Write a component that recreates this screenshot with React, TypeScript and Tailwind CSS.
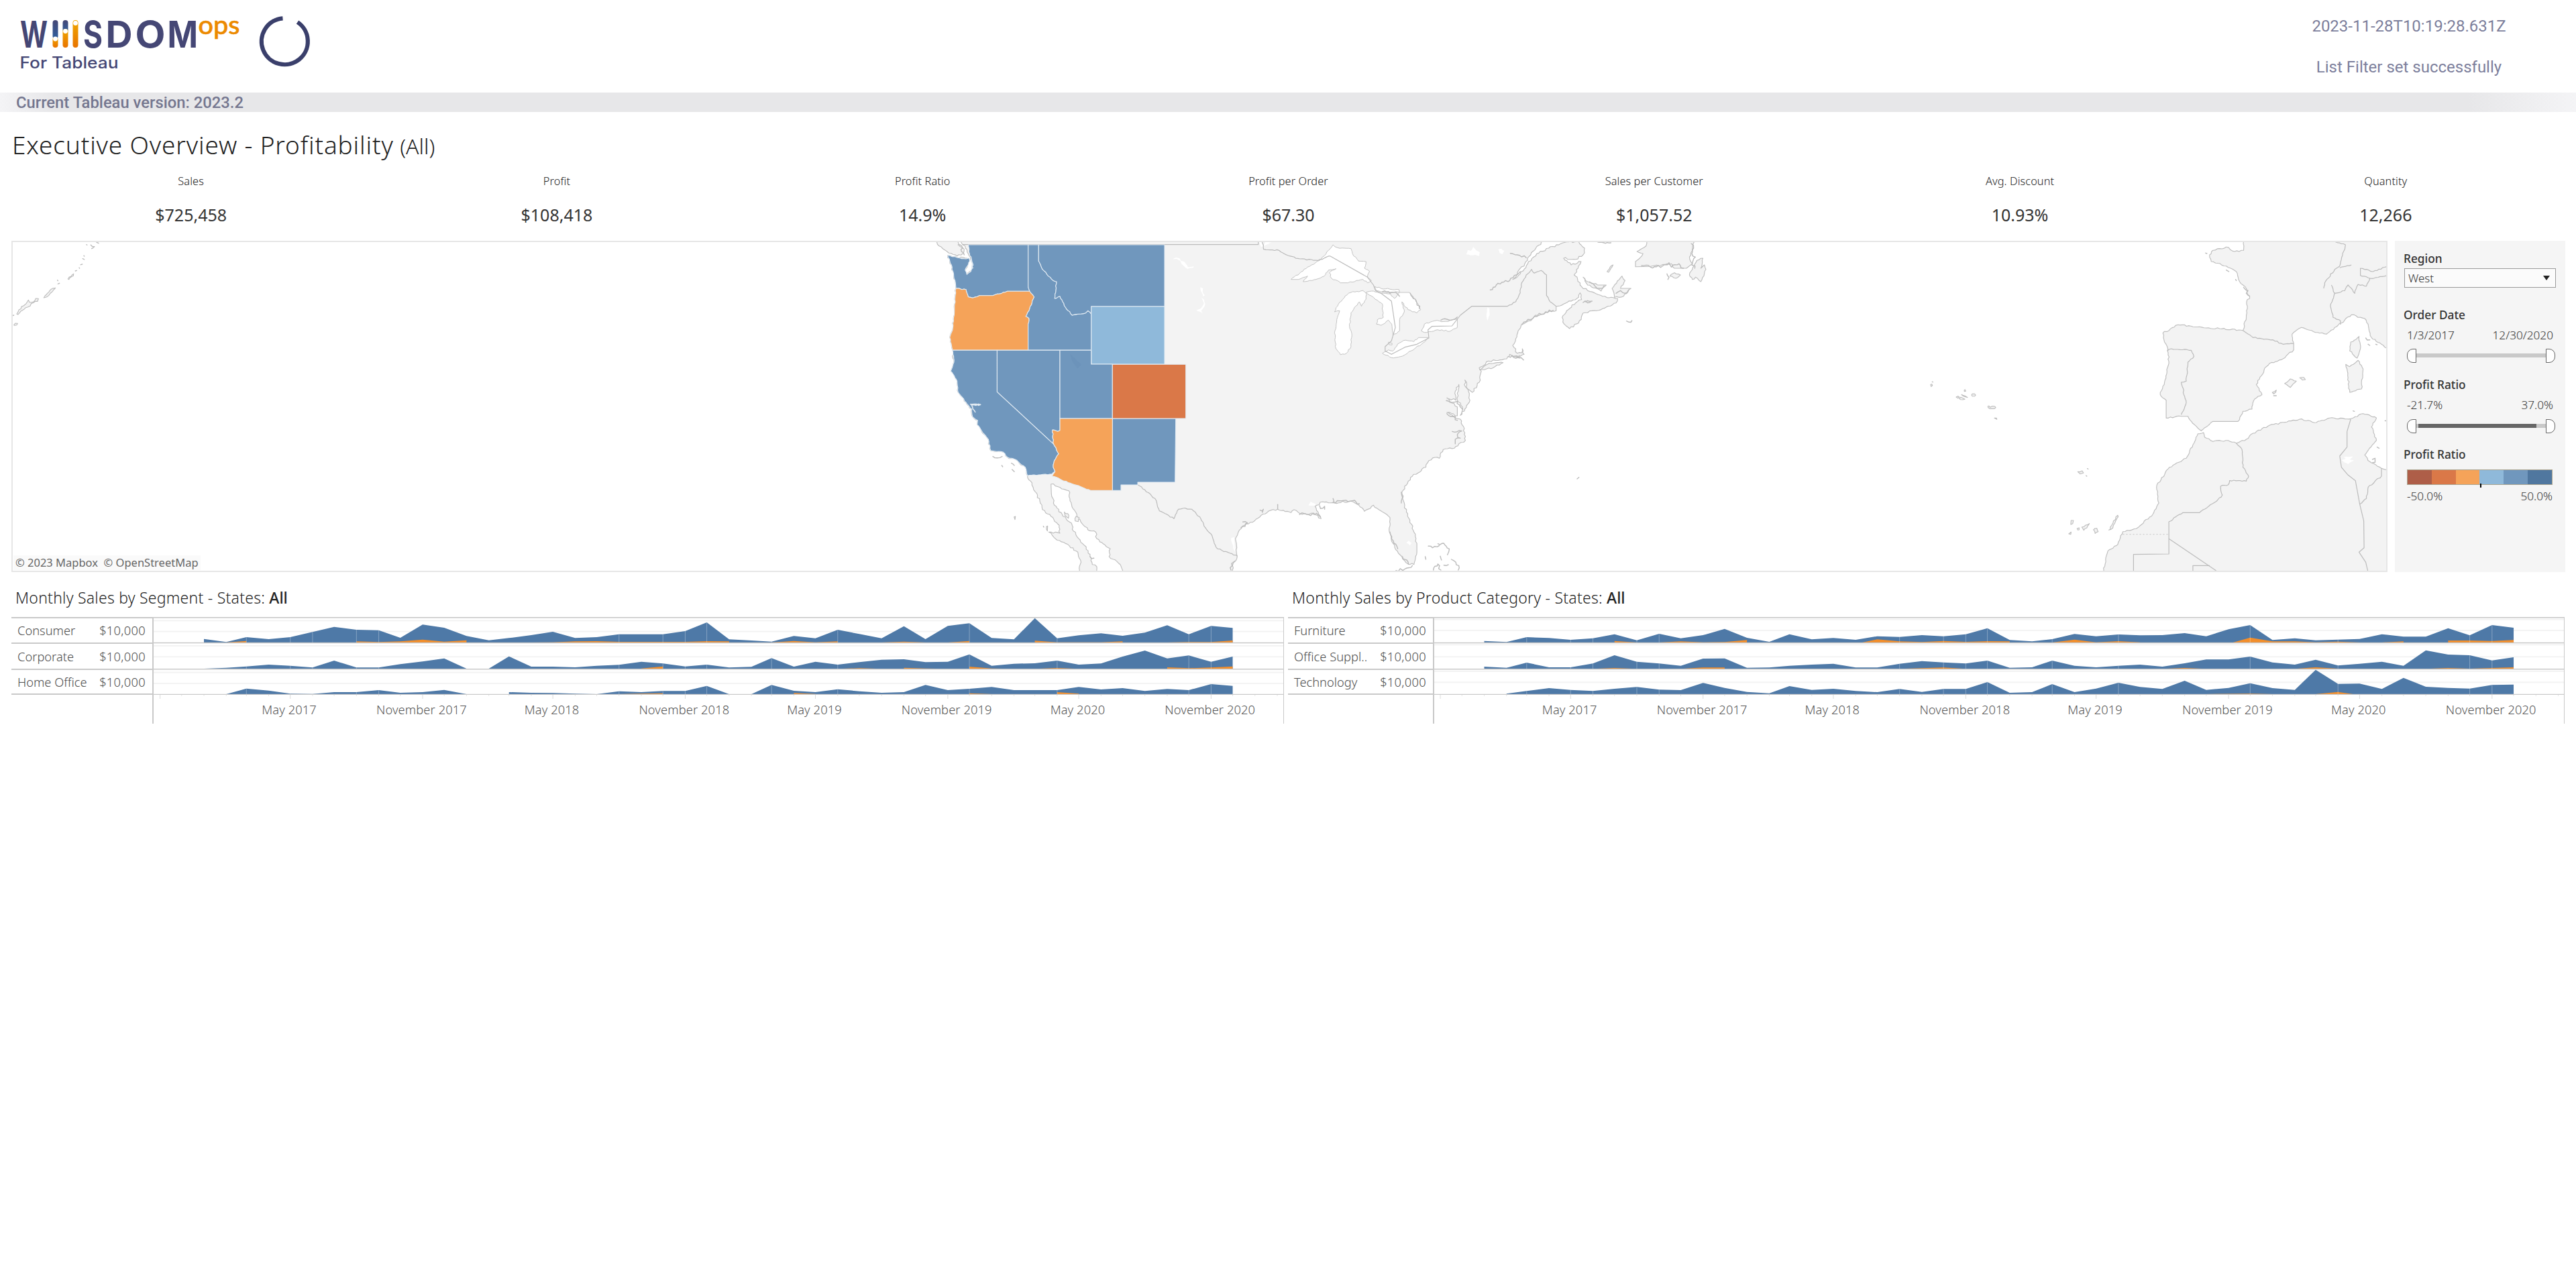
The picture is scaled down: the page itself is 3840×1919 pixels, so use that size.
type Frame = [number, number, number, number];
type Pt = [number, number];

/* Map sheets: origin x, origin y, units per pixel on x and y */
const WEST: Frame = [1380, 350, 3, 3];
const EAST: Frame = [1880, 350, 2.24, 3];
const EURO: Frame = [3060, 350, 2.0103, 3];
const ALEU: Frame = [0, 350, 3, 3];
const AZOR: Frame = [2840, 540, 3, 3];

function pts(f: Frame, s: string): Pt[] {
  return s
    .trim()
    .split(/\s+/)
    .map((p) => {
      const [x, y] = p.split(",").map(Number);
      return [f[0] + x / f[2], f[1] + y / f[3]] as Pt;
    });
}

/* Breaks short oblique segments into a jagged line; the same segment always gives the same line. */
function jag(a: Pt, b: Pt, amp: number): Pt[] {
  const swap = a[0] > b[0] || (a[0] === b[0] && a[1] > b[1]);
  const [p, q] = swap ? [b, a] : [a, b];
  const dx = q[0] - p[0];
  const dy = q[1] - p[1];
  const len = Math.hypot(dx, dy);
  if (Math.abs(dx) < 0.8 || Math.abs(dy) < 0.5 || len > 62 || len < 5) return [b];
  const n = Math.max(2, Math.round(len / 3.2));
  let seed = Math.abs(Math.round(p[0] * 31 + p[1] * 17 + q[0] * 7 + q[1] * 3)) + 1;
  const mid: Pt[] = [];
  for (let i = 1; i < n; i++) {
    seed = (seed * 1103515245 + 12345) % 2147483648;
    const r = (seed / 2147483648 - 0.5) * 2 * amp;
    mid.push([p[0] + (dx * i) / n - (dy / len) * r, p[1] + (dy * i) / n + (dx / len) * r]);
  }
  if (swap) mid.reverse();
  return [...mid, b];
}

function path(points: Pt[], closed: boolean, amp = 1.1): string {
  const list = closed ? [...points, points[0]] : points;
  const out: Pt[] = [list[0]];
  for (let i = 1; i < list.length; i++) out.push(...(amp ? jag(list[i - 1], list[i], amp) : [list[i]]));
  return "M" + out.map((p) => `${p[0].toFixed(1)} ${p[1].toFixed(1)}`).join("L") + (closed ? "Z" : "");
}

const america = [
  ...pts(
    WEST,
    "155,20 178,60 190,85 200,110 210,130 205,160 182,180 175,160 190,125 185,105 140,102 98,92 115,135 125,185 133,215 135,240 128,340 120,425 107,460 120,516 126,570 112,610 140,655 145,705 180,750 205,780 210,815 232,830 230,850 280,915 290,965 345,972 365,995 400,1005 445,1040 455,1078 475,1120 490,1150 510,1190 522,1230 560,1260 597,1300 600,1335 550,1330 580,1360 635,1385 680,1420 692,1455 685,1520 760,1520 765,1485 745,1475 735,1430 710,1390 690,1365 660,1325 655,1300 610,1250 575,1210 562,1160 560,1115 600,1130 640,1145 645,1190 670,1240 690,1275 725,1320 760,1330 765,1360 825,1405 820,1440 870,1475 895,1520 1368,1520 1375,1470 1393,1440 1385,1360 1400,1325 1425,1300 1470,1280",
  ),
  ...pts(
    EAST,
    "5,1250 25,1236 55,1228 80,1238 100,1243 110,1230 130,1248 160,1250 175,1245 200,1270 190,1240 180,1215 205,1195 245,1200 300,1192 320,1205 345,1237 375,1210 400,1235 430,1265 428,1330 440,1380 455,1415 470,1440 490,1472 510,1475 520,1420 520,1380 510,1330 502,1295 485,1240 475,1190 470,1150 485,1120 505,1080 550,1040 560,1010 580,996 595,1000 600,975 615,958 645,955 660,935 682,920 680,885 665,825 655,822 620,795 655,810 655,770 620,730 650,740 648,700 660,670 655,740 672,770 665,808 680,780 697,740 695,710 682,680 680,650 690,690 705,705 728,660 735,610 728,595 760,565 820,555 830,535 850,545 860,550 878,535 872,510 870,528 855,530 840,495 850,465 858,430 870,400 900,385 915,360 950,348 985,340 985,320 1010,310 1060,280 1065,260 1070,290 1050,305 1020,340 1005,370 1012,400 1030,420 1060,395 1075,350 1120,340 1185,305 1190,285 1140,275 1090,250 1065,225 1055,190 1045,180 1058,150 1068,120 1035,135 1010,105 1050,110 1075,90 1080,60 1060,30 1020,32 960,60 920,85 890,130 865,175 840,200 880,130 900,90 945,20",
  ),
];

const islands: [Frame, string][] = [
  [WEST, "35,20 60,50 95,75 140,95 165,85 172,65 150,50 135,20"],
  [EAST, "1290,20 1285,50 1255,75 1275,85 1250,120 1250,143 1300,142 1370,130 1380,150 1420,150 1440,130 1430,100 1440,60 1450,20"],
  [EAST, "1430,180 1445,140 1455,115 1475,105 1468,150 1480,135 1485,155 1468,210 1450,190 1440,200"],
  [EAST, "1365,185 1380,170 1400,180 1385,195"],
  [EAST, "1180,280 1172,240 1205,185 1215,205 1200,240 1235,240 1210,275"],
  [EAST, "1075,190 1090,210 1130,225 1152,225 1135,252 1090,225"],
  [EAST, "730,603 755,580 775,575 808,572 775,595"],
  [EAST, "1155,165 1165,145 1175,135 1160,168"],
  [EURO, "570,20 572,70 545,75 520,55 480,70 470,90 475,120 520,140 550,165 560,210 580,240 590,285 583,290 580,370 570,428 500,420 440,412 375,403 330,440 335,480 345,510 348,575 335,660 322,715 340,740 340,820 385,812 405,812 425,850 445,877 480,835 555,835 570,790 597,780 605,735 627,715 610,670 640,590 650,575 690,555 722,515 722,490 717,445 745,415 800,440 820,445 845,415 865,395 895,358 935,375 945,400 955,460 985,490 1010,520 1010,20"],
  [EURO, "148,1520 165,1415 195,1385 210,1328 250,1315 300,1250 318,1200 312,1120 350,1040 400,1000 420,940 435,890 452,885 455,905 480,925 525,920 550,932 580,915 600,888 650,852 740,825 790,840 830,820 895,822 930,800 970,820 955,860 970,920 935,985 950,1015 985,1045 1010,1052 1010,1520"],
  [EURO, "918,455 922,510 912,552 890,520 893,480"],
  [EURO, "915,562 930,600 925,690 890,705 885,640 878,580 890,590"],
  [EURO, "695,665 712,645 730,655 712,683"],
  [EURO, "740,640 752,638 757,648 748,650"],
  [EURO, "658,705 670,695 668,705 662,712"],
  [EURO, "75,1060 88,1056 92,1066 82,1070"],
  [EURO, "55,1278 62,1278 60,1292 54,1296"],
  [EURO, "87,1308 110,1292 102,1312 93,1322"],
  [EURO, "122,1320 132,1313 136,1328 127,1336"],
  [EURO, "73,1314 79,1311 79,1320 75,1321"],
  [EURO, "172,1318 182,1280 195,1255 196,1262 186,1290 180,1312 168,1321"],
  [EURO, "48,1338 55,1330 54,1340"],
  [WEST, "620,1240 640,1255 638,1268 622,1255"],
  [WEST, "668,1280 672,1260 686,1265 682,1283"],
  [WEST, "395,1262 401,1260 399,1274"],
  [WEST, "540,1305 545,1303 544,1325 540,1318"],
  [ALEU, "75,355 85,335 105,318 122,300 127,292 132,302 150,300 160,285 172,286 168,298 150,304 125,323 100,338 80,357"],
  [ALEU, "196,282 212,262 235,240 248,238 225,262 205,280"],
  [ALEU, "304,198 318,186 329,175 328,184 308,200"],
  [ALEU, "62,404 68,396 79,397 66,406"],
  [AZOR, "297,147 300,142 311,142 315,148 311,152 300,152"],
  [AZOR, "370,197 375,196 380,202 401,198 405,203 399,208 378,208 371,203"],
  [AZOR, "242,162 249,157 267,166 258,168 247,167"],
  [AZOR, "228,156 236,152 242,156 236,161"],
  [AZOR, "252,145 258,148 279,158 265,154"],
  [AZOR, "114,100 119,98 122,104 116,109"],
  [AZOR, "264,126 268,123 271,130 265,131"],
  [AZOR, "399,250 408,250 410,256"],
];

const scribbles: [Frame, string][] = [
  [EAST, "558,1393 572,1400 595,1390"],
  [EAST, "590,1382 610,1380 628,1405 622,1432"],
  [EAST, "635,1452 650,1465 660,1480 658,1500"],
  [EAST, "575,1500 590,1473 600,1500"],
  [EAST, "548,1440 550,1452"],
  [EAST, "598,1438 602,1455"],
  [EAST, "610,1478 625,1476"],
  [EAST, "450,1502 480,1495 505,1480"],
  [EAST, "1220,386 1228,391 1238,384"],
  [EAST, "1055,1092 1061,1085"],
  [EAST, "1355,175 1358,200"],
  [EAST, "765,247 785,225 830,205 865,165"],
  [EAST, "832,83 855,90 885,103"],
  [EAST, "840,545 868,550 876,560"],
  [EAST, "638,880 670,878 655,895 665,910 648,915 648,935"],
  [EAST, "1120,30 1150,38 1168,36"],
  [EAST, "1082,300 1105,297 1075,303"],
  [EAST, "55,1207 55,1228"],
  [EAST, "240,1180 243,1198"],
  [EAST, "195,1212 198,1225 212,1215 212,1228"],
  [EAST, "872,402 885,388 900,380 912,366 935,356 950,345 975,338"],
  [EAST, "1270,138 1300,145 1340,140 1362,125 1370,145 1395,130 1410,150"],
  [EAST, "1436,40 1444,60 1438,85 1450,100 1440,125 1448,150"],
  [EAST, "468,1152 472,1175 468,1200"],
  [EAST, "430,1330 436,1350 450,1385 456,1405"],
  [EAST, "472,1440 486,1455 492,1474"],
  [EAST, "128,1252 145,1248 165,1256 185,1246 198,1262"],
  [EAST, "240,1196 262,1190 290,1194 312,1188 328,1204"],
  [EAST, "618,742 638,750 655,745 662,760 672,780"],
  [EAST, "620,800 640,812 655,830"],
  [EAST, "1095,212 1115,230 1130,240 1145,228"],
  [EAST, "1185,262 1200,250 1215,262 1228,246"],
  [EAST, "825,545 838,540 850,552 862,540"],
  [EAST, "600,382 620,378 640,380 655,368"],
  [EAST, "405,255 430,262 450,258 462,275"],
  [EAST, "498,262 508,285 520,305 528,330"],
  [WEST, "300,992 320,998 342,992"],
  [WEST, "383,1022 396,1032"],
  [WEST, "386,1050 396,1060"],
  [WEST, "340,1032 344,1038"],
  [WEST, "526,1304 528,1308"],
  [WEST, "735,1440 752,1447"],
  [WEST, "1410,1310 1440,1290 1418,1285"],
  [WEST, "1495,1232 1510,1228 1505,1242"],
  [WEST, "1365,1500 1368,1470 1382,1460"],
  [WEST, "145,45 165,60 160,75 172,90"],
  [ALEU, "410,62 422,53 406,46"],
  [ALEU, "432,34 441,38"],
  [ALEU, "370,107 377,111"],
  [ALEU, "361,134 368,132"],
  [ALEU, "337,162 343,160"],
  [ALEU, "259,220 266,217"],
  [ALEU, "257,203 259,206"],
  [ALEU, "354,148 356,150"],
  [ALEU, "375,94 377,96"],
  [ALEU, "387,44 389,46"],
  [ALEU, "56,362 62,360"],
  [AZOR, "121,88 124,89"],
  [EURO, "520,158 528,165"],
  [EURO, "548,200 550,205"],
  [EURO, "572,235 585,250 580,262 590,275"],
  [EURO, "938,462 950,470"],
  [EURO, "945,490 950,495"],
  [EURO, "968,490 972,492"],
  [EURO, "972,950 978,955"],
  [EURO, "958,1005 966,1000 966,1018 958,1020"],
  [EURO, "900,788 904,790"],
  [EURO, "996,832 1000,833"],
  [EURO, "662,720 670,720"],
  [EURO, "104,1046 106,1048"],
  [EURO, "100,1078 102,1080"],
  [EURO, "458,82 462,84"],
];

const lakes: [Frame, string][] = [
  [EAST, "100,200 155,145 195,115 225,70 240,45 255,58 300,62 305,85 325,118 350,120 345,150 362,165 355,190 368,205 355,215 340,200 290,215 265,215 235,195 228,170 250,152 225,158 210,185 170,205 140,210 155,185 125,200"],
  [EAST, "280,275 300,258 340,250 352,265 350,288 335,320 328,300 315,320 300,350 295,410 303,450 300,500 285,530 265,537 250,510 245,440 252,390 262,340 245,345 258,310"],
  [EAST, "350,258 375,252 400,262 432,265 445,285 462,258 495,258 515,290 533,335 520,350 490,335 470,300 478,345 462,380 462,430 440,450 436,400 425,382 400,405 385,400 388,380 408,370 405,310 370,275"],
  [EAST, "380,232 400,240 460,245 462,258 400,255 385,250"],
  [EAST, "405,530 425,515 440,520 455,490 475,473 510,478 525,460 558,460 535,490 500,520 465,545 435,550"],
  [EAST, "535,430 545,400 580,385 625,388 655,375 655,415 630,432 590,425 545,437"],
  [EAST, "425,480 437,485 437,493 428,492"],
];

const ponds: [Frame, string][] = [
  [EAST, "685,88 690,68 700,72 708,55 718,70 730,78 728,95 715,90 705,92"],
  [EAST, "792,65 802,62 812,72 806,87 796,82"],
  [EAST, "755,325 762,330 763,360 755,385 752,355"],
  [EAST, "485,1378 493,1368 502,1378 497,1390"],
  [EAST, "158,1210 165,1194 183,1206 178,1212"],
  [EAST, "8,50 14,32 35,34 22,42"],
  [WEST, "1105,110 1118,102 1135,106 1142,118 1158,122 1172,145 1198,142 1198,148 1170,153 1145,132 1138,116 1122,108"],
  [WEST, "1228,235 1240,240 1238,256 1248,272 1240,275 1232,255"],
  [WEST, "1228,275 1245,290 1250,310 1240,330 1232,340 1242,355 1228,345 1210,338 1230,330 1244,308 1236,288"],
  [WEST, "1365,1358 1380,1352 1382,1400 1390,1430 1378,1410"],
  [WEST, "1490,32 1502,32 1508,56 1498,52"],
  [EURO, "865,1008 878,1003 872,995 900,992 890,1005 903,1010 885,1026"],
  [EURO, "585,285 597,298 590,292"],
];

const borders: [Frame, string, boolean][] = [
  [WEST, "165,44 1068,44 1487,44 1487,20", false],
  [WEST, "948,1118 1025,1180 1045,1235 1110,1270 1130,1228 1150,1224 1190,1228 1230,1270 1250,1310 1280,1345 1290,1380 1305,1405 1370,1427 1393,1437", true],
  [EAST, "3,20 8,65 60,70 95,95 130,108 190,115 230,95", true],
  [EAST, "230,95 355,190 375,225 382,250 400,262 435,297 448,415 435,475 414,500 414,520 435,535 480,503 520,490 560,462 557,425 570,410 637,408 665,360 703,320 822,320", false],
  [EAST, "822,320 850,300 865,260 870,215 885,180 903,155 912,172 935,160 953,180 953,272 965,300 985,320", true],
  [EURO, "343,520 355,510 415,517 423,545 405,570 400,655 385,660 400,750 385,805", true],
  [EURO, "570,428 600,460 660,470 690,490 722,487", true],
  [EURO, "835,30 877,45 860,140 845,155 815,215 812,240", true],
  [EURO, "835,225 845,262 875,250 885,225 905,262 915,222 940,230 950,195 1000,183", true],
  [EURO, "860,148 895,135", true],
  [EURO, "950,195 922,182 922,150 960,165 1000,143", true],
  [EURO, "845,262 832,320 840,370 862,385 862,402", true],
  [EURO, "550,932 567,960 570,1040 587,1080 580,1102 530,1100 526,1118 503,1125 508,1165 495,1185 440,1243 390,1243 348,1283", true],
  [EURO, "348,1283 348,1428 242,1430 242,1520", false],
  [EURO, "348,1360 490,1503", false],
  [EURO, "420,1520 420,1480 470,1480", false],
  [EURO, "893,825 882,880 882,950 860,990 865,1040 885,1075 907,1100 920,1205 932,1280 933,1400 918,1420 938,1465 945,1510", false],
  [EURO, "920,1205 940,1180 945,1130 985,1080 985,1045", true],
];

const wash = "190,45 458,45 458,230 465,253 365,253 300,272 240,272 210,283 190,278 180,245 135,240 133,215 125,185 115,135 98,92 140,102 180,108 194,104 197,118 186,140 176,158 184,178 202,164 208,150 208,130 204,108 196,85";
const states: [string, string][] = [
  ["#7097bd", wash],
  ["#f5a359", "135,240 180,245 190,278 210,283 240,272 300,272 365,253 465,253 485,278 465,330 448,365 462,375 458,400 458,516 120,516 107,460 120,425 128,340"],
  ["#7097bd", "458,45 505,45 505,118 522,155 570,205 585,210 577,285 600,275 625,325 655,360 715,350 725,340 740,355 740,516 458,516 458,400 462,375 448,365 465,330 485,278 465,253 458,230"],
  ["#7097bd", "505,45 1068,45 1068,321 740,321 740,355 725,340 715,350 655,360 625,325 600,275 577,285 585,210 570,205 522,155 505,118"],
  ["#8fb9da", "740,321 1068,321 1068,579 740,579"],
  ["#7097bd", "319,517 600,517 600,875 590,880 567,873 572,937 319,703"],
  ["#7097bd", "600,517 740,517 740,579 835,579 835,822 600,822"],
  ["#7097bd", "120,517 319,517 319,703 572,937 595,980 575,1010 570,1040 578,1060 565,1070 455,1078 445,1040 400,1005 365,995 345,972 290,965 280,915 230,850 232,830 210,815 205,780 180,750 145,705 140,655 112,610 126,570"],
  ["#7097bd", "835,822 1118,822 1115,1107 948,1107 948,1119 873,1119 873,1144 835,1144"],
  ["#da7848", "835,580 1163,580 1163,822 835,822"],
  ["#f5a359", "600,822 835,822 835,1144 737,1144 565,1080 578,1060 570,1040 575,1010 595,980 572,937 567,873 590,880 600,875"],
];

function WorldMap() {
  return (
    <svg className="block h-full w-full" viewBox="19 361 3538 490" preserveAspectRatio="none" fill="none" strokeLinejoin="round">
      <g fill="#f3f3f3" stroke="#bebebe" strokeWidth="1.15">
        <path d={path(america, true, 1.4)} />
        {islands.map(([f, s], i) => (
          <path key={i} d={path(pts(f, s), true)} />
        ))}
      </g>
      <g fill="#fff" stroke="#c4c4c4">
        {lakes.map(([f, s], i) => (
          <path key={i} d={path(pts(f, s), true, 0.9)} />
        ))}
      </g>
      {ponds.map(([f, s], i) => (
        <path key={i} fill="#fff" d={path(pts(f, s), true, 0.6)} />
      ))}
      <g stroke="#bbb" strokeWidth="1.2">
        {scribbles.map(([f, s], i) => (
          <path key={i} strokeLinecap="round" strokeWidth="1.4" d={path(pts(f, s), false, 2.2)} />
        ))}
        {borders.map(([f, s, rough], i) => (
          <path key={i} d={path(pts(f, s), false, rough ? 0.9 : 0)} />
        ))}
        <path strokeDasharray="2 3" stroke="#cfcfcf" d={path(pts(EURO, "210,1340 348,1340"), false, 0)} />
      </g>
      <g stroke="#e2ebf3" strokeWidth="1.1">
        {states.map(([c, s], i) => (
          <path key={i} fill={c} d={path(pts(WEST, s), true, 0.7)} />
        ))}
        <path d={path(pts(WEST, "200,110 212,135 205,150 214,148"), false, 1)} />
        <path d={path(pts(WEST, "198,758 245,760 205,762 222,795"), false, 1.2)} strokeWidth="1.6" />
      </g>
      <path fill="#6c93ba" d={path(pts(WEST, "645,535 665,550 690,575 695,582 680,598 668,585 655,565"), true, 0.5)} />
    </svg>
  );
}

/* ---------- area charts ---------- */

type Series = { name: string; base: number; grid: [number, number]; top: (number | null)[]; loss: [number, number][][] };
type ChartSpec = { title: string; x0: number; x1: number; jan: number; day: number; series: Series[] };

const n = null;
const segment: ChartSpec = {
  title: "Monthly Sales by Segment - States:",
  x0: 229,
  x1: 1913,
  jan: 304,
  day: 1.0724,
  series: [
    {
      name: "Consumer",
      base: 294,
      grid: [245, 196],
      top: [278, 292, 270, 279, 270, 247, 224, 237, 239, 273, 214, 228, 265, 284, 274, 261, 246, 274, 270, 257, 257, 257, 243, 204, 280, 285, 290, 265, 275, 237, 256, 275, 221, 279, 220, 208, 274, 280, 185, 275, 262, 253, 264, 250, 217, 257, 220, 229],
      loss: [[[1, 0], [2, 7], [2, 0]], [[7, 0], [7, 5], [8, 2], [9, 5], [10, 13], [11, 4], [12, 10], [12, 0]], [[15, 0], [16, 1], [17, 5], [18, 6], [19, 3], [22, 3], [23, 6], [24, 5], [24, 0]], [[26, 0], [27, 7], [28, 1], [29, 5], [29, 0]], [[31, 0], [32, 4], [33, 0]], [[34, 0], [35, 7], [35, 0]], [[38, 0], [38, 8], [39, 1], [41, 1], [42, 5], [42, 0]], [[44, 0], [45, 2], [46, 2], [47, 9], [47, 0]]],
    },
    {
      name: "Corporate",
      base: 412,
      grid: [358, 309],
      top: [411, 407, 401, 393, 398, 406, 375, 406, 406, 391, 379, 365, 411, 411, 356, 402, 402, 405, 398, 394, 380, 388, 401, 393, 406, 403, 364, 402, 380, 393, 382, 371, 369, 382, 380, 347, 398, 389, 387, 375, 393, 388, 357, 330, 365, 352, 380, 357],
      loss: [[[20, 0], [20, 2], [21, 11], [21, 0]], [[29, 0], [30, 3], [31, 0]], [[32, 0], [32, 5], [33, 2], [34, 0]], [[35, 0], [35, 10], [36, 2], [37, 0]], [[38, 0], [39, 4], [40, 0]], [[44, 0], [44, 7], [45, 3], [46, 6], [47, 11], [47, 0]]],
    },
    {
      name: "Home Office",
      base: 525,
      grid: [477, 428],
      top: [n, 525, 500, 509, 523, 524, 516, 516, 507, 519, 516, 506, 525, n, 516, 519, 520, 523, 525, 512, 516, 511, 511, 488, 525, 525, 484, 510, 516, 503, 512, 519, 516, 484, 507, 501, 493, 507, 507, 507, 493, 504, 498, 511, 502, 507, 480, 488],
      loss: [[[19, 0], [20, 2], [21, 4], [21, 0]], [[27, 0], [27, 5], [28, 1], [28, 0]], [[35, 0], [35, 4], [36, 0]], [[39, 0], [39, 9], [40, 2], [40, 0]]],
    },
  ],
};

const category: ChartSpec = {
  title: "Monthly Sales by Product Category - States:",
  x0: 2138,
  x1: 3822,
  jan: 2212.5,
  day: 1.0731,
  series: [
    {
      name: "Furniture",
      base: 294,
      grid: [240, 191],
      top: [287, 292, 270, 274, 282, 275, 257, 284, 255, 275, 261, 233, 273, 291, 257, 280, 274, 282, 266, 269, 261, 266, 257, 230, 283, 289, 279, 256, 266, 258, 262, 261, 252, 266, 235, 216, 283, 275, 284, 281, 278, 257, 268, 268, 230, 262, 216, 228],
      loss: [[[6, 0], [6, 7], [7, 0]], [[8, 0], [9, 5], [10, 1], [11, 2], [12, 11], [12, 0]], [[17.3, 0], [18, 14], [19, 5], [20, 2], [21, 7], [22, 3], [23, 6], [24, 5], [24, 0]], [[26, 0], [27, 13], [28, 1], [29, 6], [30, 1], [30, 0]], [[34.2, 0], [35, 22], [36, 5], [37, 5], [38, 1], [39, 4], [40, 0]], [[41, 0], [42, 5], [42, 0]], [[44, 0], [44, 9], [45, 9], [46, 7], [47, 11], [47, 0]]],
    },
    {
      name: "Office Suppl..",
      base: 412,
      grid: [358, 304],
      top: [402, 407, 384, 405, 405, 388, 351, 380, 388, 398, 366, 365, 407, 406, 398, 393, 389, 406, 406, 389, 377, 383, 388, 375, 407, 405, 375, 398, 405, 398, 393, 402, 387, 370, 370, 357, 383, 393, 371, 397, 389, 380, 398, 329, 348, 351, 374, 360],
      loss: [[[5, 0], [6, 4], [7, 0]], [[9, 0], [10, 6], [11, 6], [11, 0]], [[19, 0], [21, 6], [22, 0]], [[31, 0], [32, 4], [33, 0]], [[37, 0], [38, 7], [39, 1], [39, 0]], [[43, 0], [44, 4], [45, 1], [46, 4], [47, 7], [47, 0]]],
    },
    {
      name: "Technology",
      base: 525,
      grid: [472, 423],
      top: [n, 523, 511, 498, 506, 511, 501, 493, 505, 507, 475, 497, 515, 521, 489, 506, 501, 511, 516, 502, 515, 502, 502, 471, 519, 516, 480, 516, 500, 474, 493, 502, 465, 506, 497, 476, 498, 506, 416, 479, 478, 502, 452, 492, 497, 500, 484, 482],
      loss: [[[38, 0], [39, 10], [39.7, 0]], [[33, 0], [35, 2], [36, 0]]],
    },
  ],
};

const DAYS = [0, 31, 59, 90, 120, 151, 181, 212, 243, 273, 304, 334];
const dayOf = (m: number) => {
  const y = Math.floor(m / 12);
  const i = m - y * 12;
  const leap = y === 3 && i >= 2 ? 1 : 0;
  return y * 365 + DAYS[i] + leap + (y > 3 ? 1 : 0);
};
const DIVIDERS = [2, 4, 5, 7, 8, 19, 21, 22, 23, 26, 29, 35, 39, 45, 46];
const LABELS: [number, string][] = [
  [4, "May 2017"],
  [10, "November 2017"],
  [16, "May 2018"],
  [22, "November 2018"],
  [28, "May 2019"],
  [34, "November 2019"],
  [40, "May 2020"],
  [46, "November 2020"],
];

function Plot({ c }: { c: ChartSpec }) {
  const X = (m: number) => {
    const f = Math.floor(m);
    if (f < 0) return c.jan + (f === -1 ? -31 : -61) * c.day;
    const a = dayOf(f);
    return c.jan + (a + (m - f) * (dayOf(f + 1) - a)) * c.day;
  };
  const Y = (v: number) => 860 + v / 3;
  const ticks = Array.from({ length: 52 }, (_, i) => i - 2).filter((m) => X(m) < c.x1 - 3);
  return (
    <svg className="block h-[159px] w-full" viewBox={`${c.x0} 920 ${c.x1 - c.x0} 159`} preserveAspectRatio="none">
      {c.series.map((s) => {
        const runs: Pt[][] = [];
        let run: Pt[] = [];
        s.top.forEach((v, m) => {
          if (v === null) {
            if (run.length) runs.push(run);
            run = [];
          } else run.push([X(m), Y(v)]);
        });
        runs.push(run);
        return (
          <g key={s.name}>
            {s.grid.map((g) => (
              <rect key={g} x={c.x0} y={Y(g) - 1} width={c.x1 - c.x0} height="2" fill="#f3f3f3" />
            ))}
            {runs.map((r, i) => (
              <path
                key={i}
                fill="#4e79a7"
                d={`M${r[0][0]} ${Y(s.base)}L${r.map((p) => p.join(" ")).join("L")}L${r[r.length - 1][0]} ${Y(s.base)}Z`}
              />
            ))}
            {s.loss.map((l, i) => (
              <path key={i} fill="#f28e2b" d={"M" + l.map(([m, h]) => `${X(m)} ${Y(s.base - h)}`).join("L") + "Z"} />
            ))}
            {DIVIDERS.map((m) => {
              const v = s.top[m];
              return v === null ? null : <path key={m} d={`M${X(m)} ${Y(v)}V${Y(s.base)}`} stroke="#fff" strokeOpacity=".35" strokeWidth=".9" />;
            })}
          </g>
        );
      })}
      <g fill="#c9c9c9">
        <rect x={c.x0} y="920" width={c.x1 - c.x0} height="1.6" />
        <rect x={c.x0} y="957.8" width={c.x1 - c.x0} height="1.5" />
        <rect x={c.x0} y="997" width={c.x1 - c.x0} height="1.5" />
        <rect x={c.x0} y="1034.8" width={c.x1 - c.x0} height="1.2" />
      </g>
      {ticks.map((m) => {
        const major = (m + 2) % 6 === 0;
        return <rect key={m} x={X(m) - 0.5} y="1036" width="1" height={major ? 6 : 2} fill={major ? "#dcdcdc" : "#e6e6e6"} />;
      })}
      {LABELS.map(([m, t]) => (
        <text key={t} x={X(m) - 1.6} y="1065" textAnchor="middle" fill="#555" className="font-['Noto_Sans'] text-[18.3px] font-light tracking-[0.1px]">
          {t}
        </text>
      ))}
    </svg>
  );
}

function Panel({ c, head }: { c: ChartSpec; head: string }) {
  const cell = "flex items-center justify-between border-t-2 border-[#c9c9c9] pl-[9px] pr-[10px]";
  return (
    <section className="flex flex-col">
      <h2 className="h-9 pl-[6px] text-[23px] leading-[37px] font-light tracking-[0.25px] whitespace-nowrap text-[#222]">
        {c.title} <span className="font-medium tracking-normal">All</span>
      </h2>
      <div className="mt-[11px] flex border-r border-[#c9c9c9]">
        <div className={head + " grid shrink-0 grid-rows-[38px_39px_37px_45px] border-r-2 border-[#c9c9c9] text-[18.3px] leading-6 font-light text-[#4c4c4c]"}>
          {c.series.map((s) => (
            <div key={s.name} className={cell}>
              <span>{s.name}</span>
              <span className="tracking-[0.3px]">$10,000</span>
            </div>
          ))}
          <div className="border-t-2 border-[#c9c9c9]" />
        </div>
        <div className="grow">
          <Plot c={c} />
        </div>
      </div>
    </section>
  );
}

/* ---------- header ---------- */

function Logo() {
  return (
    <svg className="block h-[138px] w-[480px] shrink-0" viewBox="0 0 480 138">
      <defs>
        <linearGradient id="amber" x1="0" y1="0" x2="0" y2="1">
          <stop offset="0" stopColor="#f0a800" />
          <stop offset="1" stopColor="#e87400" />
        </linearGradient>
        <linearGradient id="navy" x1="0" y1="0" x2="0" y2="1">
          <stop offset="0" stopColor="#454775" />
          <stop offset="1" stopColor="#2f5f9e" />
        </linearGradient>
      </defs>
      <g fill="#454775" className="font-['Inter'] text-[55px] font-bold">
        <text x="30" y="70.5" textLength="41" lengthAdjust="spacingAndGlyphs">W</text>
        <text x="124" y="70.5" textLength="29" lengthAdjust="spacingAndGlyphs">S</text>
        <text x="157.5" y="70.5" textLength="40" lengthAdjust="spacingAndGlyphs">D</text>
        <text x="201.5" y="70.5" textLength="45" lengthAdjust="spacingAndGlyphs">O</text>
        <text x="249.5" y="70.5" textLength="45.5" lengthAdjust="spacingAndGlyphs">M</text>
      </g>
      <rect x="78.5" y="30" width="8" height="28" rx="4" fill="url(#navy)" />
      <rect x="78.5" y="55" width="8" height="16" rx="4" fill="url(#amber)" />
      <circle cx="82.5" cy="58" r="3.4" fill="#fff" />
      <rect x="93.5" y="30" width="8" height="18" rx="4" fill="url(#navy)" />
      <rect x="93.5" y="43" width="8" height="28" rx="4" fill="url(#amber)" />
      <circle cx="97.5" cy="46.5" r="3.4" fill="#fff" />
      <rect x="108.5" y="30" width="8" height="41" rx="4" fill="url(#amber)" />
      <circle cx="112.5" cy="34.5" r="3.4" fill="#fff" />
      <text x="295.5" y="51" textLength="62" lengthAdjust="spacingAndGlyphs" fill="#ec8a00" stroke="#ec8a00" strokeWidth="0.6" className="font-['Lato'] text-[38px] font-medium">
        ops
      </text>
      <text x="29.5" y="102" textLength="147" lengthAdjust="spacingAndGlyphs" fill="#454775" className="font-['Inter'] text-[24px] font-medium">
        For Tableau
      </text>
      <path d="M421.5 27.300A34.5 34.5 0 1 0 443.5 33" fill="none" stroke="#3a3f6b" strokeWidth="6.200" />
    </svg>
  );
}

/* ---------- filters ---------- */

function Slider({ active }: { active: boolean }) {
  return (
    <div className="flex h-[22px] items-center">
      <div className="h-[21px] w-[14px] rounded-l-[9px] border border-[#666] bg-white" />
      <div className="flex h-[6px] grow bg-[#c9c9c9]">{active && <div className="ml-[3px] mr-[14px] grow bg-[#666]" />}</div>
      <div className="h-[21px] w-[14px] rounded-r-[9px] border border-[#666] bg-white" />
    </div>
  );
}

function Filters() {
  const h = "h-6 text-[17.3px] leading-6 font-medium text-[#333]";
  const v = "flex h-6 justify-between text-[17.2px] leading-6 font-light text-[#333]";
  return (
    <aside className="h-[494px] w-[254px] bg-[#f5f5f5] pl-[13px] pr-[14px] pt-[15px]">
      <div className={h}>Region</div>
      <div className="mt-[2px] ml-px flex h-[29px] items-center justify-between border border-[#9a9a9a] bg-[#fbfbfb] pl-[5px] pr-[8px] text-[17px] font-light text-[#333]">
        West
        <svg className="h-[7px] w-[10px]" viewBox="0 0 10 7">
          <path d="M0 0h10L5 7z" fill="#222" />
        </svg>
      </div>
      <div className={h + " mt-[29px]"}>Order Date</div>
      <div className={v + " mt-[6px] pr-[4px] pl-[5px]"}>
        <span>1/3/2017</span>
        <span>12/30/2020</span>
      </div>
      <div className="mt-[7px] pr-px pl-[5px]">
        <Slider active={false} />
      </div>
      <div className={h + " mt-[21px]"}>Profit Ratio</div>
      <div className={v + " mt-[6px] pr-[4px] pl-[5px]"}>
        <span>-21.7%</span>
        <span>37.0%</span>
      </div>
      <div className="mt-[8px] pr-px pl-[5px]">
        <Slider active />
      </div>
      <div className={h + " mt-[20px]"}>Profit Ratio</div>
      <div className="relative mt-[10px] mr-[5px] ml-[5px] grid h-[23px] grid-cols-6 border border-[#aaa48f]">
        <div className="bg-[#ae5e48]" />
        <div className="bg-[#da7848]" />
        <div className="bg-[#f5a359]" />
        <div className="bg-[#8fb9da]" />
        <div className="bg-[#7097bd]" />
        <div className="bg-[#50779f]" />
        <div className="absolute top-[20px] left-[108px] h-[6px] w-[2px] bg-black" />
      </div>
      <div className={v + " mt-[5px] px-[5px]"}>
        <span>-50.0%</span>
        <span>50.0%</span>
      </div>
    </aside>
  );
}

const kpis = [
  ["Sales", "$725,458"],
  ["Profit", "$108,418"],
  ["Profit Ratio", "14.9%"],
  ["Profit per Order", "$67.30"],
  ["Sales per Customer", "$1,057.52"],
  ["Avg. Discount", "10.93%"],
  ["Quantity", "12,266"],
];

export default function App() {
  return (
    <div className="flex h-[1919px] w-[3840px] flex-col overflow-hidden bg-white font-['Noto_Sans',sans-serif]">
      <header className="flex h-[138px] shrink-0 justify-between">
        <Logo />
        <div className="flex w-[498px] flex-col items-center gap-[29px] pt-[23px] font-['Roboto'] text-[24px] leading-8 text-[#7d7f9c]">
          <span>2023-11-28T10:19:28.631Z</span>
          <span>List Filter set successfully</span>
        </div>
      </header>
      <div className="h-[29px] shrink-0 bg-linear-[90deg,#f4f4f6_0px,#e7e7e9_80px,#e7e7e9_3680px,#f4f4f6_3840px] pl-6 font-['Roboto'] text-[23.8px] leading-[31px] font-medium text-[#74768f]">
        Current Tableau version: 2023.2
      </div>
      <h1 className="mt-[21px] h-14 shrink-0 pl-[18px] text-[37px] leading-[56px] font-light tracking-[0.85px] text-[#222]">
        Executive Overview - Profitability <span className="ml-[-1px] text-[32px] tracking-normal">(All)</span>
      </h1>
      <div className="mt-[14px] ml-[12px] grid w-[3817px] shrink-0 grid-cols-7 text-center">
        {kpis.map(([k, v]) => (
          <div key={k} className="flex flex-col gap-5">
            <span className="h-6 text-[16.3px] leading-6 font-light tracking-[0.1px] text-[#222]">{k}</span>
            <span className="h-9 text-[25px] leading-9 text-[#333]">{v}</span>
          </div>
        ))}
      </div>
      <div className="mt-[21px] flex shrink-0 justify-between pr-4 pl-[17px]">
        <div className="relative h-[494px] w-[3542px] border-2 border-[#e6e6e6]">
          <WorldMap />
          <div className="absolute bottom-px left-px h-[22px] bg-[#fafafa] px-[3px] text-[16.5px] leading-[22px] whitespace-pre text-[#666]">© 2023 Mapbox  © OpenStreetMap</div>
        </div>
        <Filters />
      </div>
      <div className="mt-5 grid shrink-0 grid-cols-[1897px_1903px] gap-[6px] pl-[17px]">
        <Panel c={segment} head="w-[212px]" />
        <Panel c={category} head="w-[218px]" />
      </div>
    </div>
  );
}
